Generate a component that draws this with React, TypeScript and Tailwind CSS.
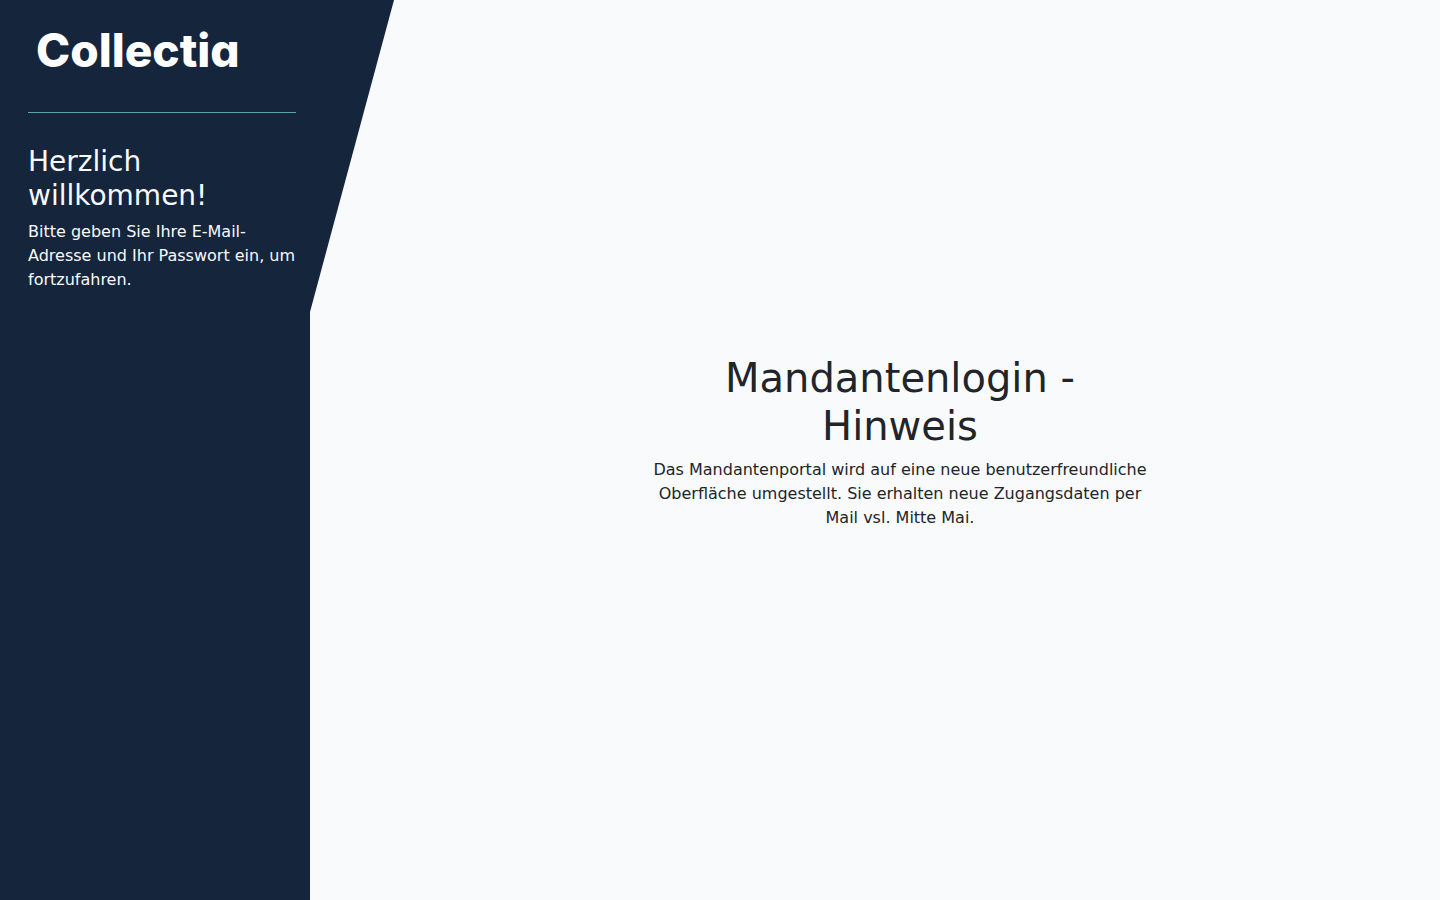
function Logo() {
  return (
    <a
      href="/"
      className="flex h-[68px] items-center pl-2 font-['Inter',sans-serif] text-[46px] font-extrabold text-white [font-feature-settings:'cv11']"
    >
      Collectia
    </a>
  );
}

function Sidebar() {
  return (
    <aside className="relative w-[310px] shrink-0 bg-[#15253b] pt-4 pr-3.5 pl-7 text-[#f8fafc]">
      {/* Slanted edge that leans over the content area */}
      <svg
        viewBox="0 0 84 312"
        aria-hidden="true"
        className="absolute top-0 left-full h-[312px] w-[84px] fill-[#15253b]"
      >
        <path d="M0 0H84L0 312Z" />
      </svg>

      <Logo />

      <hr className="mt-7 border-[#5fa3a8]" />

      <h2 className="mt-8 text-[28px] leading-[34px]">
        Herzlich willkommen!
      </h2>

      <p className="mt-[7px] text-base">
        Bitte geben Sie Ihre E-Mail-Adresse und Ihr Passwort ein, um
        fortzufahren.
      </p>
    </aside>
  );
}

export default function App() {
  return (
    <div className="flex min-h-screen bg-[#f9fafc] font-['DejaVu_Sans',sans-serif]">
      <Sidebar />

      <main className="ml-[50px] flex flex-1 items-center justify-center">
        <section className="w-full max-w-[500px] text-center text-[#212529]">
          <h1 className="text-[40px] leading-12">Mandantenlogin - Hinweis</h1>

          <p className="mt-2 mb-4 text-base">
            Das Mandantenportal wird auf eine neue benutzerfreundliche
            Oberfläche umgestellt. Sie erhalten neue Zugangsdaten per Mail vsl.
            Mitte Mai.
          </p>
        </section>
      </main>
    </div>
  );
}
